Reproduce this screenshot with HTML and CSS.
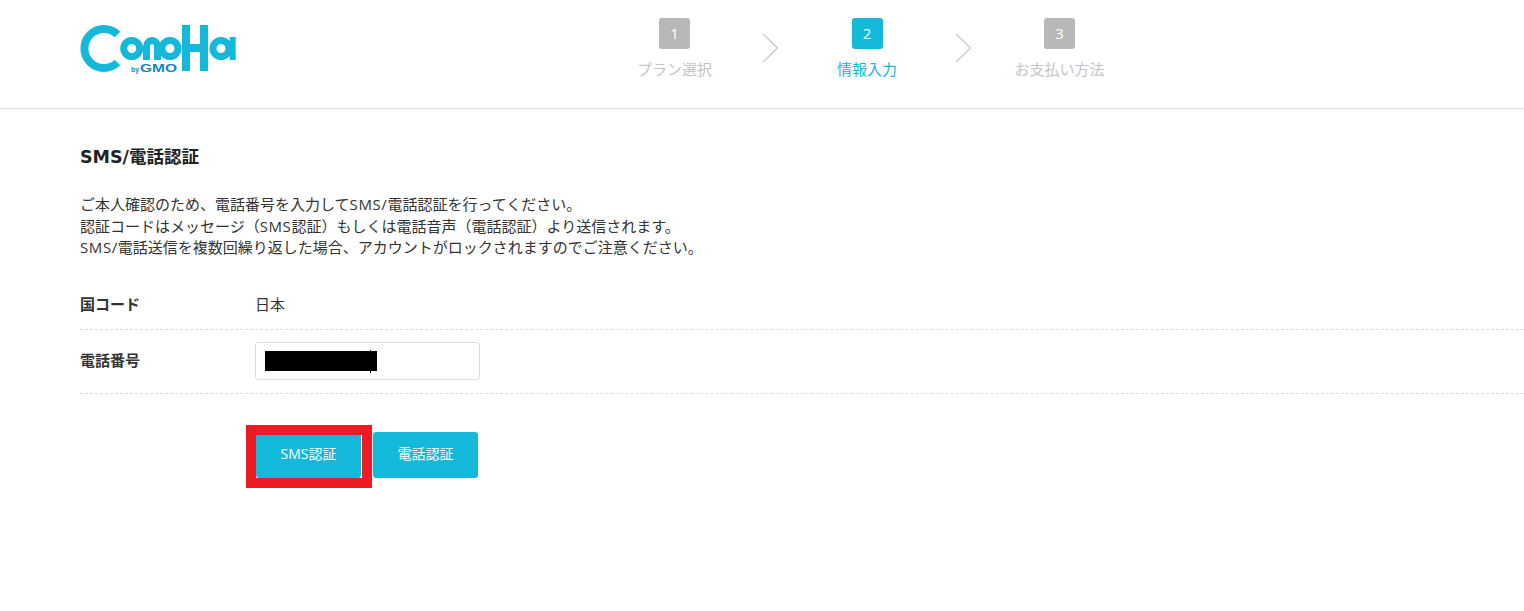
FILE: index.html
```html
<!DOCTYPE html>
<html lang="ja">
<head>
<meta charset="utf-8">
<title>SMS/電話認証</title>
<link rel="stylesheet" href="styles.css">
</head>
<body>
<header class="header">
  <a class="logo" aria-label="ConoHa by GMO">
    <svg width="157" height="50" viewBox="0 0 157 50" fill="none">
      <g stroke="#14b8d9">
        <path d="M37.500 10.500A19.500 19.500 0 1 0 37.500 38.500" stroke-width="8"/>
        <circle cx="51.700" cy="24.500" r="8" stroke-width="7"/>
        <path d="M66.500 36V23a5 6 0 0 1 11 0V36" stroke-width="7"/>
        <circle cx="90" cy="24.500" r="8" stroke-width="7"/>
        <path d="M106 1V47M124 1V47M106 24H124" stroke-width="8"/>
        <circle cx="141" cy="24.500" r="8" stroke-width="7"/>
        <path d="M152.700 13V36" stroke-width="6"/>
      </g>
      <text x="51" y="47.500" class="logo-by">by</text>
      <text x="60" y="47.500" class="logo-gmo" textLength="37" lengthAdjust="spacingAndGlyphs">GMO</text>
    </svg>
  </a>
  <ol class="steps">
    <li class="step">
      <span class="step-num">1</span>
      <span class="step-label">プラン選択</span>
    </li>
    <li class="step-arrow">
      <svg width="17" height="30" viewBox="0 0 17 30" fill="none"><path d="M1 1L15.500 15L1 29" stroke="#c8c8c8" stroke-width="1.200"/></svg>
    </li>
    <li class="step step-active">
      <span class="step-num">2</span>
      <span class="step-label">情報入力</span>
    </li>
    <li class="step-arrow">
      <svg width="17" height="30" viewBox="0 0 17 30" fill="none"><path d="M1 1L15.500 15L1 29" stroke="#c8c8c8" stroke-width="1.200"/></svg>
    </li>
    <li class="step">
      <span class="step-num">3</span>
      <span class="step-label">お支払い方法</span>
    </li>
  </ol>
</header>
<main class="main">
  <h1 class="title">SMS/電話認証</h1>
  <p class="lead">ご本人確認のため、電話番号を入力して<span class="lat">SMS/</span>電話認証を行ってください。<br>認証コードはメッセージ（<span class="lat">SMS</span>認証）もしくは電話音声（電話認証）より送信されます。<br><span class="lat">SMS/</span>電話送信を複数回繰り返した場合、アカウントがロックされますのでご注意ください。</p>
  <div class="row row-country">
    <div class="row-label">国コード</div>
    <div class="row-value">日本</div>
  </div>
  <div class="row row-phone">
    <div class="row-label">電話番号</div>
    <div class="phone-input"><span class="redaction"></span></div>
  </div>
  <div class="actions">
    <div class="sms-wrap">
      <button class="btn btn-sms" type="button">SMS認証</button>
      <span class="highlight"></span>
    </div>
    <button class="btn" type="button">電話認証</button>
  </div>
</main>
</body>
</html>
```
FILE: styles.css
```css
* { box-sizing: border-box; }
html, body { margin: 0; padding: 0; }
body {
  background: #fff;
  color: #333;
  font-family: "Open Sans", "Noto Sans CJK JP", sans-serif;
  font-size: 15px;
  min-height: 100vh;
}
.header {
  display: flex;
  height: 109px;
  border-bottom: 1px solid #ddd;
  padding-left: 80px;
}
.logo { display: block; width: 157px; height: 50px; margin-top: 24px; }
.logo svg { display: block; }
.logo-by { font: 700 7px "Liberation Sans", sans-serif; fill: #1685c4; }
.logo-gmo { font: 700 11px "Liberation Sans", sans-serif; fill: #1685c4; }
.steps {
  display: flex;
  list-style: none;
  margin: 0 0 0 362.500px;
  padding: 0;
}
.step {
  width: 150px;
  padding-top: 18px;
  display: flex;
  flex-direction: column;
  align-items: center;
  color: #c4c4c4;
}
.step-num {
  width: 31px;
  height: 31px;
  border-radius: 3px;
  background: #b8b8b8;
  color: #fff;
  display: flex;
  align-items: center;
  justify-content: center;
  font-size: 15px;
  line-height: 1;
}
.step-label { margin-top: 9px; line-height: 22px; white-space: nowrap; }
.step-active { color: #14b8d9; }
.step-active .step-num { background: #14b8d9; }
.step-arrow {
  width: 42.500px;
  padding-top: 33px;
  display: flex;
  justify-content: center;
}
.step-arrow svg { display: block; }
.main { padding: 0 0 60px 80px; }
.title {
  margin: 36px 0 0;
  font-family: "DejaVu Sans", "Noto Sans CJK JP", sans-serif;
  font-size: 17.500px;
  line-height: 24px;
  font-weight: 700;
  color: #222;
}
.lead {
  margin: 25px 0 0;
  line-height: 21.500px;
  white-space: nowrap;
}
.lat { letter-spacing: 0.600px; }
.row {
  display: flex;
  align-items: center;
  border-bottom: 1px dashed #ddd;
}
.row-country { height: 64px; margin-top: 7px; padding-top: 12px; }
.row-phone { height: 64px; }
.row-phone .row-label { margin-bottom: 3px; }
.row-label { width: 175px; font-weight: 700; }
.phone-input {
  width: 225px;
  height: 38px;
  border: 1px solid #ddd;
  border-radius: 3px;
  padding: 8px 9px;
}
.redaction {
  display: block;
  position: relative;
  width: 112px;
  height: 20px;
  background: #000;
}
.redaction::after {
  content: "";
  position: absolute;
  left: 105px;
  top: -1px;
  width: 1px;
  height: 23px;
  background: #000;
}
.actions {
  display: flex;
  gap: 12px;
  margin: 38px 0 0 176px;
}
.sms-wrap { position: relative; }
.btn {
  display: block;
  width: 105px;
  height: 46px;
  border: 0;
  border-radius: 3px;
  background: #14b8d9;
  color: #fff;
  font: inherit;
  font-size: 14px;
  padding: 0 0 4px;
}
.highlight {
  position: absolute;
  left: -10px;
  top: -7px;
  width: 126px;
  height: 63px;
  border: 10px solid #ed1c24;
}
.btn-sms { box-shadow: 1px 0 0 #fff; }
```
